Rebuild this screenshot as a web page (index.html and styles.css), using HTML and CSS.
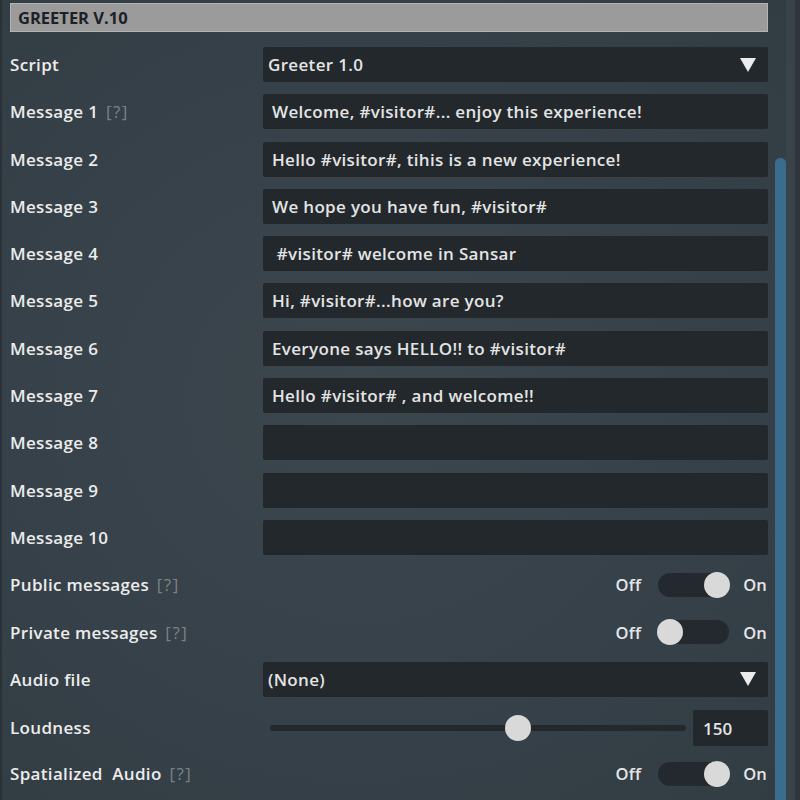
FILE: index.html
```html
<!DOCTYPE html>
<html>
<head>
<meta charset="utf-8">
<link rel="stylesheet" href="styles.css">
</head>
<body>
<div class="page">
  <div class="panel">
    <div class="header">GREETER V.10</div>
    <div class="rows">
      <div class="row"><div class="label">Script</div><div class="field select"><span>Greeter 1.0</span><span class="tri"></span></div></div>
      <div class="row"><div class="label">Message 1 <span class="help">[?]</span></div><div class="field text">Welcome, #visitor#... enjoy this experience!</div></div>
      <div class="row"><div class="label">Message 2</div><div class="field text">Hello #visitor#, tihis is a new experience!</div></div>
      <div class="row"><div class="label">Message 3</div><div class="field text">We hope you have fun, #visitor#</div></div>
      <div class="row"><div class="label">Message 4</div><div class="field text">&nbsp;#visitor# welcome in Sansar</div></div>
      <div class="row"><div class="label">Message 5</div><div class="field text">Hi, #visitor#...how are you?</div></div>
      <div class="row"><div class="label">Message 6</div><div class="field text">Everyone says HELLO!! to #visitor#</div></div>
      <div class="row"><div class="label">Message 7</div><div class="field text">Hello #visitor# , and welcome!!</div></div>
      <div class="row"><div class="label">Message 8</div><div class="field text"></div></div>
      <div class="row"><div class="label">Message 9</div><div class="field text"></div></div>
      <div class="row"><div class="label">Message 10</div><div class="field text"></div></div>
      <div class="row"><div class="label">Public messages <span class="help">[?]</span></div><div class="toggle-wrap"><span class="tl">Off</span><span class="switch on"><span class="knob"></span></span><span class="tl">On</span></div></div>
      <div class="row"><div class="label">Private messages <span class="help">[?]</span></div><div class="toggle-wrap"><span class="tl">Off</span><span class="switch"><span class="knob"></span></span><span class="tl">On</span></div></div>
      <div class="row"><div class="label">Audio file</div><div class="field select"><span>(None)</span><span class="tri"></span></div></div>
      <div class="row"><div class="label">Loudness</div><div class="slider-wrap"><div class="slider"><span class="sknob" style="left: 59.6%"></span></div><div class="value">150</div></div></div>
      <div class="row"><div class="label">Spatialized&nbsp; Audio <span class="help">[?]</span></div><div class="toggle-wrap"><span class="tl">Off</span><span class="switch on"><span class="knob"></span></span><span class="tl">On</span></div></div>
    </div>
  </div>
  <div class="scroll"><div class="thumb"></div></div>
  <div class="edge"></div>
</div>
</body>
</html>
```
FILE: styles.css
```css
html, body {
  margin: 0;
  padding: 0;
  height: 100%;
}
body {
  background: radial-gradient(ellipse at 45% 50%, #3b464d 0%, #37424a 45%, #323c43 100%);
  font-family: "Open Sans", "Noto Sans", sans-serif;
  color: #e8e8e8;
  overflow: hidden;
}
.page {
  display: flex;
  height: 800px;
  border-left: 2px solid #2b3237;
  box-sizing: border-box;
}
.panel {
  width: 766px;
  padding-left: 8px;
  padding-top: 3px;
  box-sizing: border-box;
}
.header {
  height: 29px;
  box-sizing: border-box;
  background: #9b9b9b;
  border: 1px solid #b3b3b3;
  color: #1d2125;
  font-weight: 700;
  font-size: 16.5px;
  line-height: 27px;
  padding-left: 7px;
}
.rows {
  display: flex;
  flex-direction: column;
  gap: 12.3px;
  margin-top: 15px;
}
.row {
  display: grid;
  grid-template-columns: 253px 1fr;
  height: 35px;
  align-items: center;
}
.label {
  font-size: 17px;
  font-weight: 600;
  letter-spacing: 0.33px;
  color: #ececec;
}
.help {
  color: #7b8287;
  font-weight: 400;
  margin-left: 3px;
  letter-spacing: 1.5px;
}
.field {
  height: 35px;
  background: #22282c;
  border-radius: 2px;
  box-sizing: border-box;
  display: flex;
  align-items: center;
  font-size: 17px;
  font-weight: 600;
  letter-spacing: 0.33px;
  color: #e4e4e4;
  white-space: pre;
}
.field.text {
  padding-left: 9px;
}
.field.select {
  padding-left: 5px;
  padding-right: 12px;
  justify-content: space-between;
}
.tri {
  width: 0;
  height: 0;
  border-left: 8px solid transparent;
  border-right: 8px solid transparent;
  border-top: 14px solid #ececec;
}
.toggle-wrap {
  display: flex;
  justify-content: flex-end;
  align-items: center;
  padding-right: 1px;
  font-size: 16.5px;
  font-weight: 600;
  letter-spacing: 0.2px;
}
.tl {
  color: #e6e6e6;
}
.switch {
  position: relative;
  width: 71px;
  height: 24px;
  border-radius: 12px;
  background: #23292e;
  margin: 0 14px 0 17px;
}
.knob {
  position: absolute;
  top: -1px;
  left: -1px;
  width: 26px;
  height: 26px;
  border-radius: 50%;
  background: #d9d9d9;
}
.switch.on .knob {
  left: auto;
  right: -1px;
}
.slider-wrap {
  display: flex;
  align-items: center;
  gap: 7px;
}
.slider {
  position: relative;
  flex: 1;
  height: 6px;
  border-radius: 3px;
  background: #22282c;
  margin-left: 7px;
}
.sknob {
  position: absolute;
  top: 50%;
  width: 26px;
  height: 26px;
  margin: -13px 0 0 -13px;
  border-radius: 50%;
  background: #d9d9d9;
}
.value {
  width: 75px;
  height: 36px;
  background: #22282c;
  border-radius: 2px;
  box-sizing: border-box;
  padding-left: 10px;
  display: flex;
  align-items: center;
  font-size: 17px;
  font-weight: 600;
  color: #e4e4e4;
  margin-top: 1px;
}
.scroll {
  width: 11px;
  margin-left: 7px;
  padding-top: 158px;
}
.thumb {
  height: 100%;
  background: #3a6c8e;
  border-radius: 5px 5px 0 0;
}
.edge {
  width: 14px;
  border-left: 9px solid #394349;
  background: #2f373c;
  box-sizing: border-box;
}
```
